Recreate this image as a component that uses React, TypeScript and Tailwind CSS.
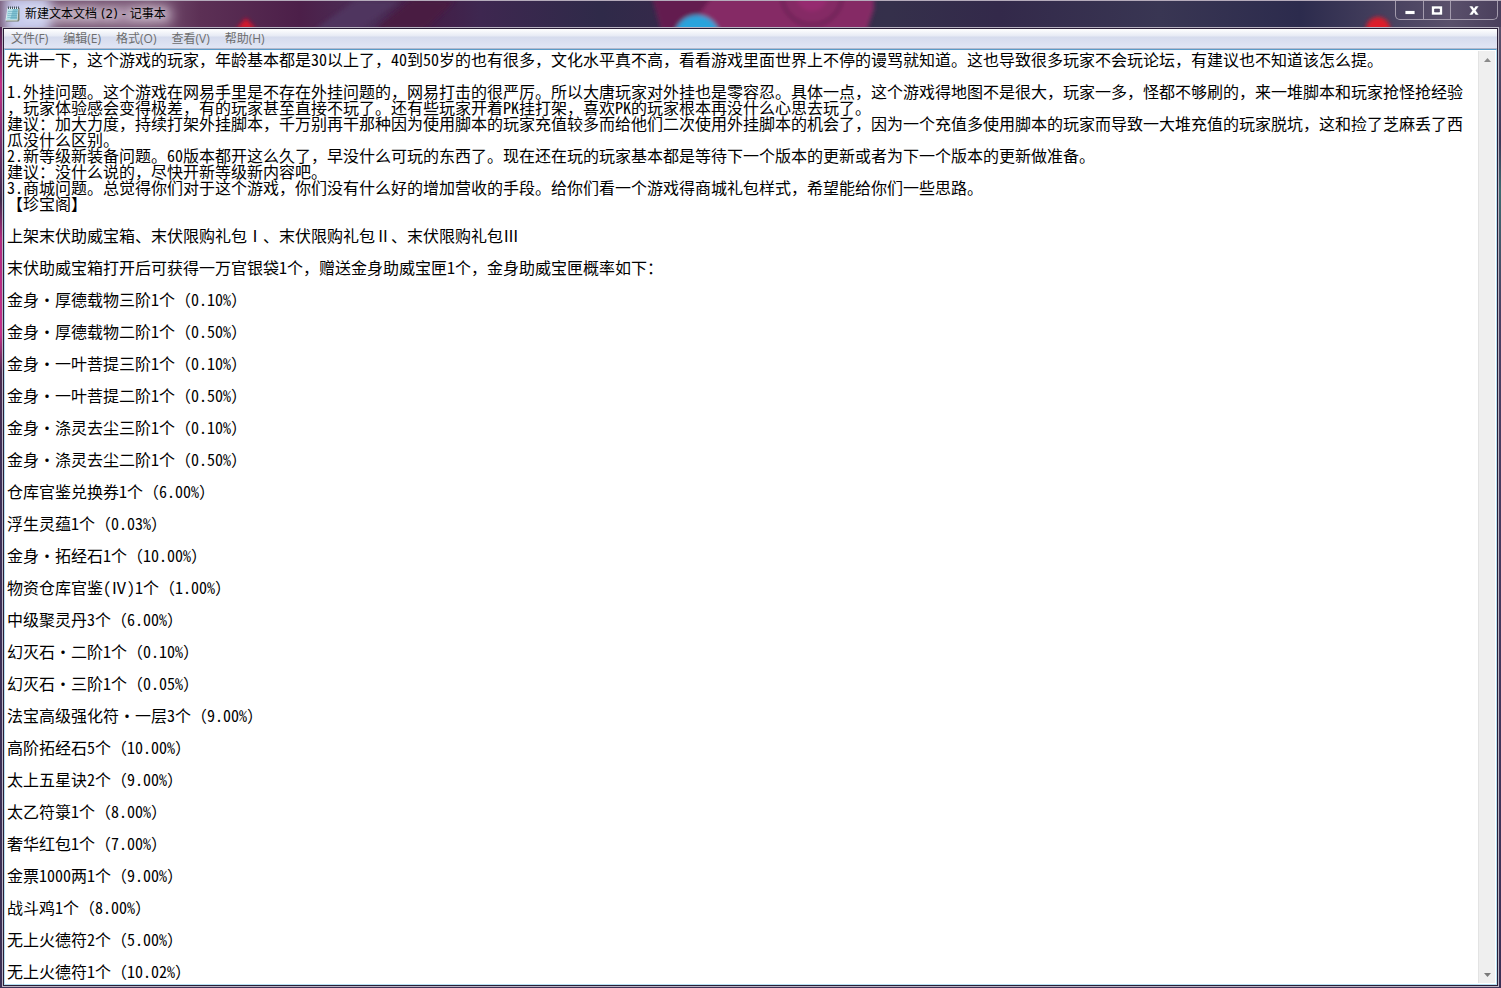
import React from "react";

const menus = ["文件(F)", "编辑(E)", "格式(O)", "查看(V)", "帮助(H)"];

const intro = [
  "先讲一下，这个游戏的玩家，年龄基本都是30以上了，40到50岁的也有很多，文化水平真不高，看看游戏里面世界上不停的谩骂就知道。这也导致很多玩家不会玩论坛，有建议也不知道该怎么提。",
  "",
  "1.外挂问题。这个游戏在网易手里是不存在外挂问题的，网易打击的很严厉。所以大唐玩家对外挂也是零容忍。具体一点，这个游戏得地图不是很大，玩家一多，怪都不够刷的，来一堆脚本和玩家抢怪抢经验，玩家体验感会变得极差，有的玩家甚至直接不玩了。还有些玩家开着PK挂打架，喜欢PK的玩家根本再没什么心思去玩了。",
  "建议：加大力度，持续打架外挂脚本，千万别再干那种因为使用脚本的玩家充值较多而给他们二次使用外挂脚本的机会了，因为一个充值多使用脚本的玩家而导致一大堆充值的玩家脱坑，这和捡了芝麻丢了西瓜没什么区别。",
  "2.新等级新装备问题。60版本都开这么久了，早没什么可玩的东西了。现在还在玩的玩家基本都是等待下一个版本的更新或者为下一个版本的更新做准备。",
  "建议：没什么说的，尽快开新等级新内容吧。",
  "3.商城问题。总觉得你们对于这个游戏，你们没有什么好的增加营收的手段。给你们看一个游戏得商城礼包样式，希望能给你们一些思路。",
];

// every entry from here on is followed by an empty line
const items = [
  "【珍宝阁】",
  "上架末伏助威宝箱、末伏限购礼包Ⅰ、末伏限购礼包Ⅱ、末伏限购礼包Ⅲ",
  "末伏助威宝箱打开后可获得一万官银袋1个，赠送金身助威宝匣1个，金身助威宝匣概率如下：",
  "金身·厚德载物三阶1个（0.10%）",
  "金身·厚德载物二阶1个（0.50%）",
  "金身·一叶菩提三阶1个（0.10%）",
  "金身·一叶菩提二阶1个（0.50%）",
  "金身·涤灵去尘三阶1个（0.10%）",
  "金身·涤灵去尘二阶1个（0.50%）",
  "仓库官鉴兑换券1个（6.00%）",
  "浮生灵蕴1个（0.03%）",
  "金身·拓经石1个（10.00%）",
  "物资仓库官鉴(Ⅳ)1个（1.00%）",
  "中级聚灵丹3个（6.00%）",
  "幻灭石·二阶1个（0.10%）",
  "幻灭石·三阶1个（0.05%）",
  "法宝高级强化符·一层3个（9.00%）",
  "高阶拓经石5个（10.00%）",
  "太上五星诀2个（9.00%）",
  "太乙符箓1个（8.00%）",
  "奢华红包1个（7.00%）",
  "金票1000两1个（9.00%）",
  "战斗鸡1个（8.00%）",
  "无上火德符2个（5.00%）",
  "无上火德符1个（10.02%）",
];

const content = intro.join("\n") + "\n" + items.join("\n\n");

function NotepadIcon() {
  return (
    <svg width="16" height="16" viewBox="0 0 16 16" aria-hidden="true">
      <path d="M3 2h11.5v12l-1 1.500H1z" fill="#77806f" />
      <path d="M2.500 2h11L12.500 14.500H.5z" fill="#eef7f8" />
      <path d="M3 3h10l-1 10.500H1.500z" fill="#7fc0d0" />
      <path d="M3 3h5l-3 10.500H1.500z" fill="#b4dfe8" />
      <path d="M3 5.500h9.500M3 7.500h9.500M2.500 9.500h9.500M2.500 11.500h9.500" stroke="#5fa3b8" strokeWidth="0.5" />
      <path d="M3.500 .5v2.500M5.500 .5v2.500M7.500 .5v2.500M9.500 .5v2.500M11.500 .5v2.500M13.500 .5v2.500" stroke="#4b5a60" strokeWidth="1" />
    </svg>
  );
}

// desktop wallpaper seen through the glass title bar
function Backdrop() {
  return (
    <div className="absolute inset-0 overflow-hidden bg-[linear-gradient(90deg,#6b4a68_0px,#74506f_150px,#5c3055_200px,#4c1f49_300px,#4a3058_370px,#451c45_420px,#3e2750_480px,#2f2a49_600px,#35294a_660px,#35304b_890px,#33294a_1000px,#393653_1160px,#2c2b4d_1300px,#5a506b_1450px,#4a3f5c_1501px)]">
      <svg className="absolute left-0 top-0" width="1501" height="28" aria-hidden="true">
        <defs>
          <filter id="soft" x="-20%" y="-50%" width="140%" height="200%">
            <feGaussianBlur stdDeviation="2" />
          </filter>
          <filter id="haze" x="-20%" y="-100%" width="140%" height="300%">
            <feGaussianBlur stdDeviation="6" />
          </filter>
        </defs>
        <g filter="url(#haze)">
          <rect x="14" y="5" width="158" height="18" fill="#c3aec3" opacity="0.8" />
          <rect x="4" y="-6" width="46" height="40" fill="#c9cdee" />
        </g>
        <g filter="url(#soft)">
          <path d="M355 0h45l-40 28h-45z" fill="#50345f" />
          <path d="M410 0h45l-30 28h-50z" fill="#481a42" />
          <path d="M236 28l10-11 10 11z" fill="#d8122c" />
          <path d="M652 -4h222v12l-8 24H662z" fill="#852a65" />
          <path d="M652 -4h60l-25 34h-25z" fill="#641f50" />
          <circle cx="812" cy="-6" r="30" fill="none" stroke="#6f2458" strokeWidth="4" />
          <circle cx="812" cy="-6" r="16" fill="#962a6f" />
          <circle cx="697" cy="37" r="23" fill="#2ba3dc" />
          <circle cx="1378" cy="28" r="12" fill="#dd1a2c" />
        </g>
      </svg>
    </div>
  );
}

export default function App() {
  return (
    <div className="relative flex h-screen flex-col overflow-hidden bg-[#3d3357] font-['Open_Sans','Noto_Sans_CJK_SC',sans-serif]">
      {/* title bar */}
      <header className="relative flex h-[27px] shrink-0 items-center border-t border-[#b5abbb]">
        <Backdrop />
        <div className="relative flex flex-1 items-center gap-1 pl-[5px]">
          <NotepadIcon />
          <h1 className="font-['DejaVu_Sans','Noto_Sans_CJK_SC',sans-serif] text-xs leading-4 text-black [text-shadow:0_0_8px_#fff9,0_0_12px_#fff8]">新建文本文档 (2) - 记事本</h1>
        </div>
        <div className="relative mr-[3px] flex h-[19px] self-start rounded-b-[5px] border border-t-0 border-[#a39bad] text-white">
          <button aria-label="最小化" className="flex w-[28px] items-center justify-center border-r border-[#a39bad]">
            <svg width="12" height="10" viewBox="0 0 12 10">
              <path d="M1 5.500h10v4H1z" fill="#fff" stroke="#44405a" strokeWidth="0.8" />
            </svg>
          </button>
          <button aria-label="最大化" className="flex w-[27px] items-center justify-center border-r border-[#a39bad]">
            <svg width="12" height="11" viewBox="0 0 12 11">
              <path d="M.5 1h11v9H.5zM3.500 4v3h5V4z" fill="#fff" fillRule="evenodd" stroke="#44405a" strokeWidth="0.6" />
            </svg>
          </button>
          <button aria-label="关闭" className="flex w-[46px] items-center justify-center">
            <svg width="12" height="11" viewBox="0 0 12 11">
              <path d="M1 1h3.500L6 3.200 7.500 1H11L7.900 5.500 11 10H7.500L6 7.800 4.500 10H1l3.100-4.500z" fill="#fff" stroke="#44405a" strokeWidth="0.5" />
            </svg>
          </button>
        </div>
      </header>

      <div className="flex min-h-0 flex-1 pb-px">
        <div className="w-[2px] bg-[linear-gradient(180deg,#4d2350_0%,#c2308a_6%,#8f2f78_10%,#3c2a4c_18%,#b02a80_22%,#c2308a_32%,#4a2c50_36%,#3c2f58_45%,#3a2f55_100%)]" />
        <div className="flex min-w-0 flex-1 flex-col border border-[#b9b3c2]">
          <div className="flex min-h-0 flex-1 flex-col border border-[#2a1f38]">
            <nav className="flex h-[20px] shrink-0 items-center gap-[3px] border-b border-[#b4b9cc] bg-[linear-gradient(180deg,#ffffff_0px,#e6eaf4_7px,#d5dbed_8px,#e0e5f4_18px)] pl-px">
              {menus.map((menu) => (
                <button key={menu} className="px-[6px] text-xs leading-4 text-[#6d6d6d]">
                  {menu}
                </button>
              ))}
            </nav>

            <main className="flex min-h-0 flex-1 border border-[#b5e0f2] border-t-[#5a9bc8] bg-white">
              <textarea
                aria-label="文本编辑区"
                lang="zh-CN"
                spellCheck={false}
                defaultValue={content}
                className="min-w-0 flex-1 resize-none overflow-hidden bg-white pl-[2px] pt-px font-['Noto_Sans_Mono_CJK_SC','Noto_Sans_CJK_SC',monospace] text-base/4 text-black outline-none [line-break:anywhere]"
              />
              <div className="my-px mr-px flex w-[17px] flex-col justify-between border-l border-[#e3e3e3] bg-[#efefef]">
                <button aria-label="向上滚动" className="flex h-[17px] items-center justify-center">
                  <svg width="7" height="4" viewBox="0 0 7 4">
                    <path d="M3.500 0L7 4H0z" fill="#8a8a8a" />
                  </svg>
                </button>
                <button aria-label="向下滚动" className="flex h-[17px] items-center justify-center">
                  <svg width="7" height="4" viewBox="0 0 7 4">
                    <path d="M0 0h7L3.500 4z" fill="#7a7a7a" />
                  </svg>
                </button>
              </div>
            </main>
          </div>
        </div>
        <div className="w-[2px] bg-[linear-gradient(180deg,#5a506b_0%,#3c3858_12%,#3f6a70_17%,#4a3f63_30%,#3a2f55_100%)]" />
      </div>
    </div>
  );
}
